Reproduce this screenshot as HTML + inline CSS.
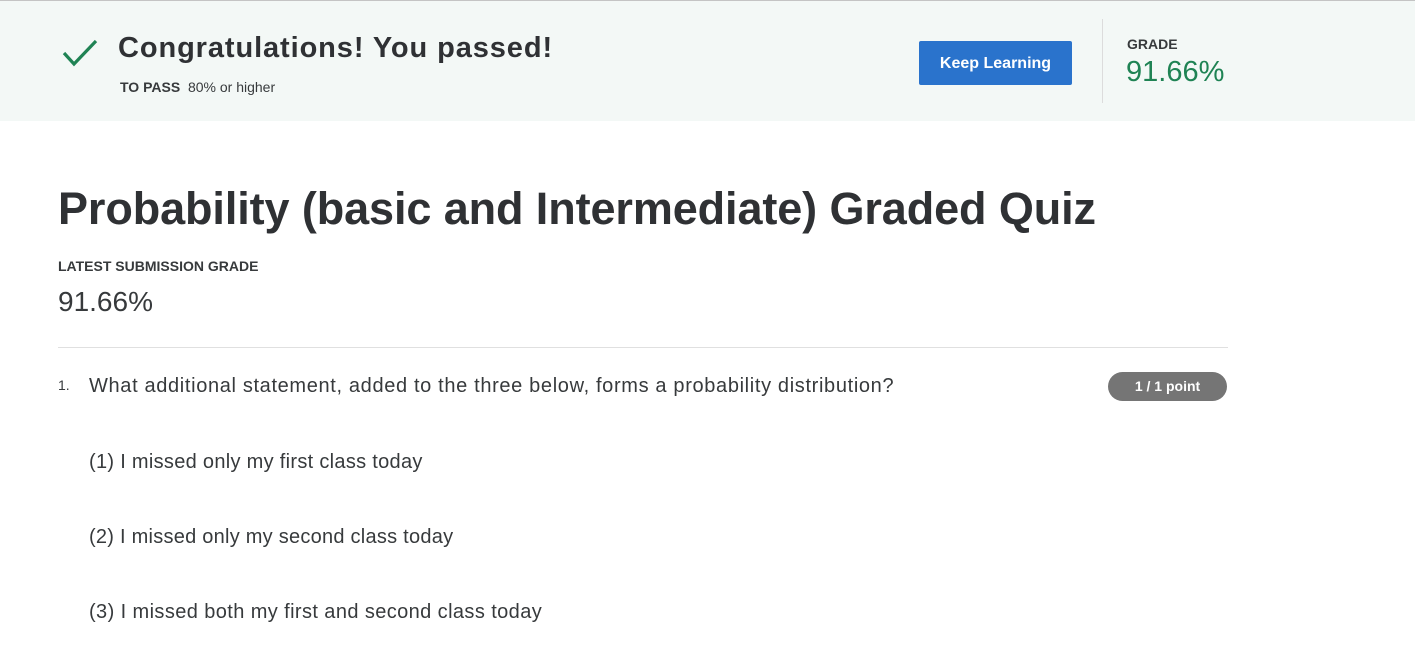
<!DOCTYPE html>
<html><head><meta charset="utf-8"><style>
*{margin:0;padding:0;box-sizing:border-box}
body{width:1415px;height:657px;overflow:hidden;background:#fff;font-family:"Liberation Sans",Arial,sans-serif;color:#373a3c;position:relative}
.a{position:absolute;white-space:nowrap}
.band{position:absolute;left:0;top:0;width:1415px;height:121px;background:#f3f8f6;border-top:1px solid #c4c4c4}
</style></head><body>
<div class="band"></div>
<svg class="a" style="left:62px;top:39px" width="36" height="28" viewBox="0 0 36 28"><path d="M2 14 L12 25 L34 2" fill="none" stroke="#1f8354" stroke-width="3.2"/></svg>
<div class="a" style="left:118px;top:32px;font-size:29px;font-weight:bold;color:#2f3134;letter-spacing:0.9px">Congratulations! You passed!</div>
<div class="a" style="left:120px;top:79px;font-size:14px;color:#373a3c"><b>TO PASS</b>&nbsp; 80% or higher</div>
<div class="a" style="left:919px;top:41px;width:153px;height:44px;background:#2a73cc;border-radius:2px;color:#fff;font-weight:bold;font-size:16px;text-align:center;line-height:46px">Keep Learning</div>
<div class="a" style="left:1102px;top:19px;width:1px;height:84px;background:#dcdcdc"></div>
<div class="a" style="left:1127px;top:36px;font-size:14px;font-weight:bold;color:#373a3c">GRADE</div>
<div class="a" style="left:1126px;top:56px;font-size:29px;color:#1f8354">91.66%</div>
<div class="a" style="left:58px;top:183px;font-size:45px;font-weight:bold;color:#2f3134;letter-spacing:-0.1px">Probability (basic and Intermediate) Graded Quiz</div>
<div class="a" style="left:58px;top:258px;font-size:14px;font-weight:bold">LATEST SUBMISSION GRADE</div>
<div class="a" style="left:58px;top:286px;font-size:28px">91.66%</div>
<div class="a" style="left:58px;top:347px;width:1170px;height:1px;background:#e0e0e0"></div>
<div class="a" style="left:58px;top:377px;font-size:14px">1.</div>
<div class="a" style="left:89px;top:375px;font-size:20px;letter-spacing:0.65px">What additional statement, added to the three below, forms a probability distribution?</div>
<div class="a" style="left:1108px;top:372px;width:119px;height:29px;background:#757575;border-radius:15px;color:#fff;font-weight:bold;font-size:14px;text-align:center;line-height:29px">1 / 1 point</div>
<div class="a" style="left:89px;top:451px;font-size:20px;letter-spacing:0.3px">(1) I missed only my first class today</div>
<div class="a" style="left:89px;top:526px;font-size:20px;letter-spacing:0.25px">(2) I missed only my second class today</div>
<div class="a" style="left:89px;top:601px;font-size:20px;letter-spacing:0.4px">(3) I missed both my first and second class today</div>
</body></html>
